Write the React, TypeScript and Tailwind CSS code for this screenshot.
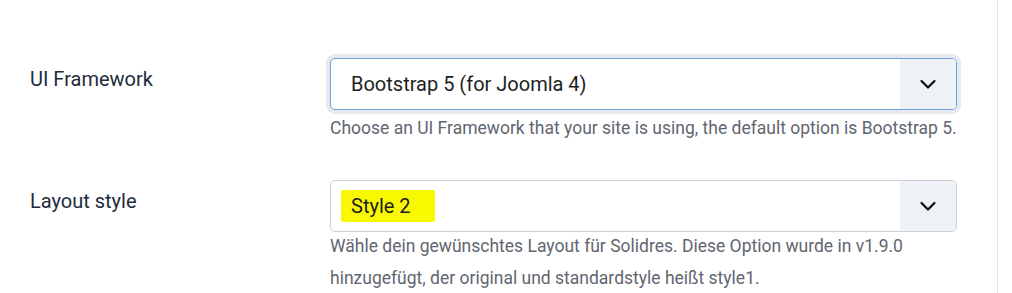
import { ReactNode } from "react"

function Chevron() {
  return (
    <svg width="18" height="18" viewBox="0 0 18 18" fill="none">
      <path d="M2.5 6l6.5 6.5L15.5 6" stroke="#111" strokeWidth="2.2" strokeLinecap="round" strokeLinejoin="round" />
    </svg>
  )
}

function Select({ children, focused }: { children: ReactNode; focused?: boolean }) {
  return (
    <div
      className={`flex h-[52px] items-stretch rounded-[5px] border bg-white ${
        focused ? "border-[#6da3db] shadow-[0_0_0_4px_#e6eaf0]" : "border-[#ccd1d8]"
      }`}
    >
      <div className="flex flex-1 items-center pl-[20px] text-[20px] text-[#1d1f22]">{children}</div>
      <div className="flex w-[56px] items-center justify-center rounded-r-[4px] bg-[#eef2f7]">
        <Chevron />
      </div>
    </div>
  )
}

export default function App() {
  return (
    <div className="h-[293px] w-[998px] border-r border-[#dde1e6] bg-white pt-[58px] font-['Roboto',sans-serif]">
      <div className="flex">
        <div className="w-[330px] pl-[30px] pt-[6px] text-[20px] text-[#212b3c]">UI Framework</div>
        <div className="w-[627px]">
          <Select focused>Bootstrap 5 (for Joomla 4)</Select>
          <p className="mt-[2px] text-[17.5px] leading-[32px] text-[#5f6670]">
            Choose an UI Framework that your site is using, the default option is Bootstrap 5.
          </p>
        </div>
      </div>
      <div className="mt-[36px] flex">
        <div className="w-[330px] pl-[30px] pt-[6px] text-[20px] text-[#212b3c]">Layout style</div>
        <div className="w-[627px]">
          <Select>
            <span className="-ml-[10px] rounded-[2px] bg-[#f8f800] pl-[10px] pr-[24px] py-[1px]">Style 2</span>
          </Select>
          <p className="-mt-[2px] text-[17.5px] leading-[32px] text-[#5f6670]">
            Wähle dein gewünschtes Layout für Solidres. Diese Option wurde in v1.9.0 hinzugefügt, der original und
            standardstyle heißt style1.
          </p>
        </div>
      </div>
    </div>
  )
}
